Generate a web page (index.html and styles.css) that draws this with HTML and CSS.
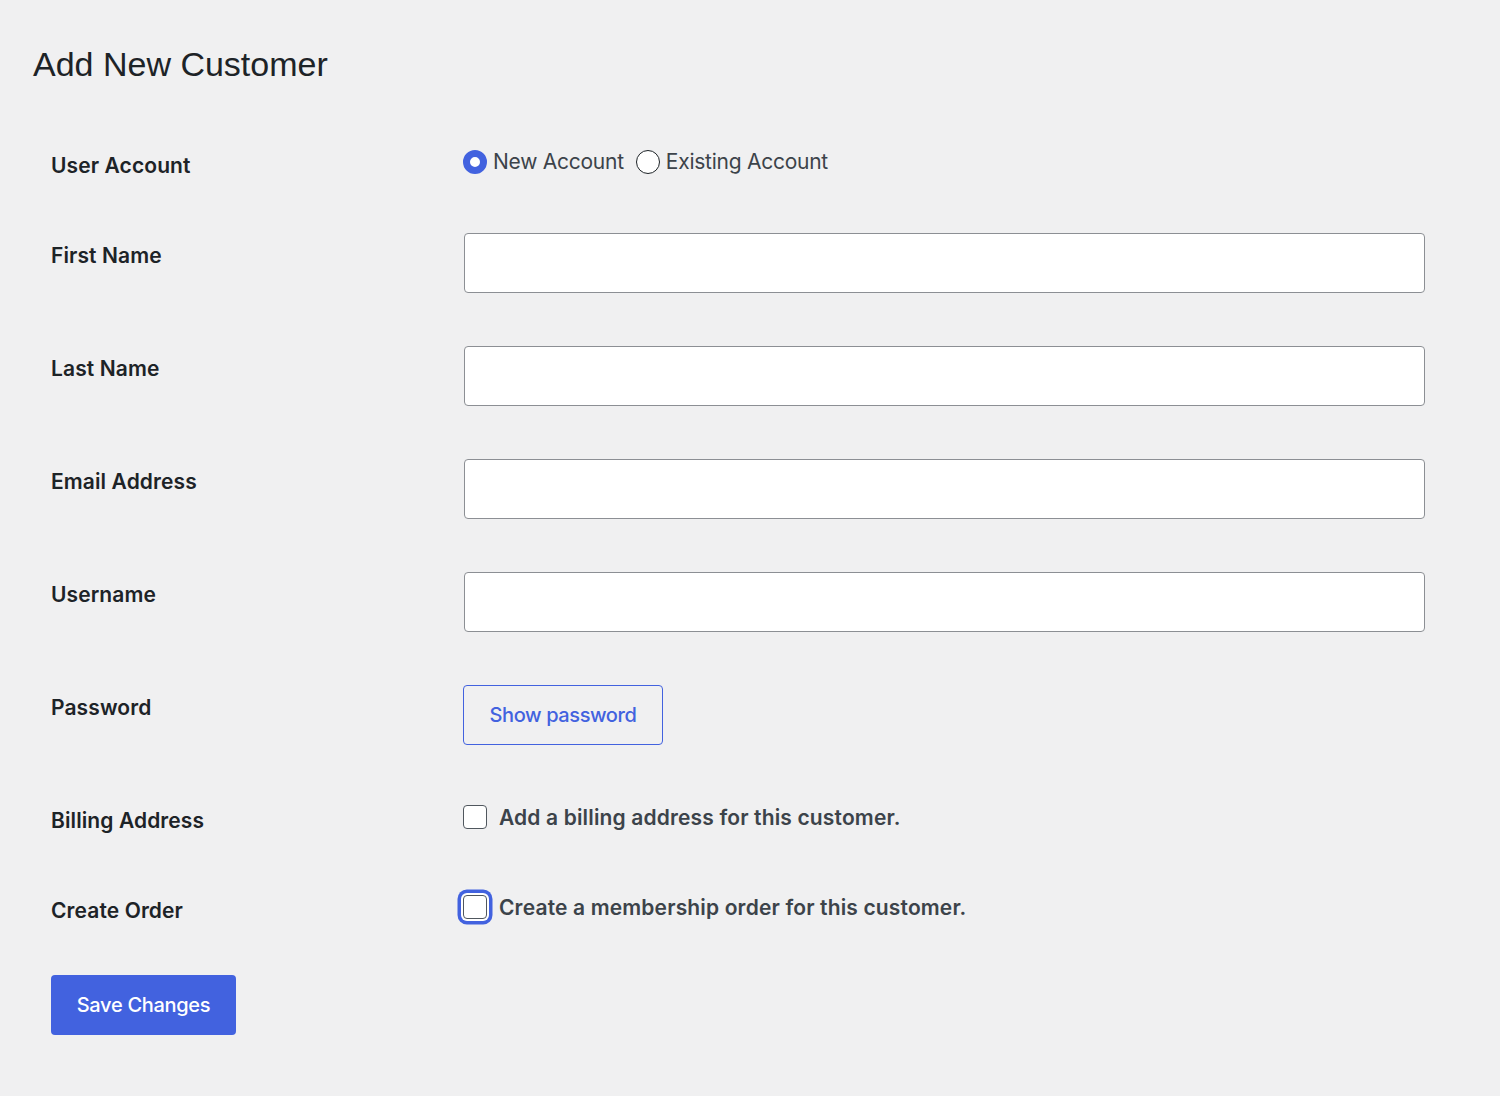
FILE: index.html
```html
<!DOCTYPE html>
<html lang="en">
<head>
<meta charset="utf-8">
<title>Add New Customer</title>
<link rel="stylesheet" href="styles.css">
</head>
<body>
<div class="page">
  <h1 class="title">Add New Customer</h1>
  <form class="form">
    <div class="row row-short">
      <div class="label">User Account</div>
      <div class="field field-radio">
        <label class="choice"><span class="radio checked"></span><span class="choice-text">New Account</span></label>
        <label class="choice"><span class="radio"></span><span class="choice-text">Existing Account</span></label>
      </div>
    </div>
    <div class="row">
      <div class="label">First Name</div>
      <div class="field"><div class="text-input"></div></div>
    </div>
    <div class="row">
      <div class="label">Last Name</div>
      <div class="field"><div class="text-input"></div></div>
    </div>
    <div class="row">
      <div class="label">Email Address</div>
      <div class="field"><div class="text-input"></div></div>
    </div>
    <div class="row">
      <div class="label">Username</div>
      <div class="field"><div class="text-input"></div></div>
    </div>
    <div class="row">
      <div class="label">Password</div>
      <div class="field"><div class="btn-secondary">Show password</div></div>
    </div>
    <div class="row row-short">
      <div class="label">Billing Address</div>
      <div class="field field-check">
        <label class="check-line"><span class="checkbox"></span><span class="check-text">Add a billing address for this customer.</span></label>
      </div>
    </div>
    <div class="row row-short">
      <div class="label">Create Order</div>
      <div class="field field-check">
        <label class="check-line"><span class="checkbox focused"></span><span class="check-text">Create a membership order for this customer.</span></label>
      </div>
    </div>
    <div class="actions">
      <div class="btn-primary">Save Changes</div>
    </div>
  </form>
</div>
</body>
</html>
```

FILE: styles.css
```css
html, body {
  margin: 0;
  padding: 0;
  background: #f0f0f1;
}
body {
  font-family: Inter, "Noto Sans", sans-serif;
  color: #1d2327;
}
.page {
  padding-top: 42px;
  width: 1500px;
  height: 1096px;
  box-sizing: border-box;
}
.title {
  margin: 0;
  padding-left: 33px;
  font-family: "Liberation Sans", Arial, sans-serif;
  font-weight: 400;
  font-size: 34px;
  line-height: 44px;
  color: #1d2327;
}
.form {
  margin-top: 34.5px;
  padding-left: 51px;
}
.row {
  display: grid;
  grid-template-columns: 412px 962px;
  height: 113px;
}
.row-short {
  height: 90px;
}
.label {
  padding-top: 31px;
  font-size: 21px;
  line-height: 27px;
  font-weight: 600;
  color: #1d2327;
  letter-spacing: 0.1px;
}
.field {
  padding-top: 22.5px;
  box-sizing: border-box;
}
.text-input {
  margin-left: 1px;
  width: 961px;
  height: 60px;
  box-sizing: border-box;
  background: #fff;
  border: 1.5px solid #8c8f94;
  border-radius: 4px;
}
.field-radio {
  padding-top: 29px;
  display: flex;
  align-items: center;
  gap: 12px;
  height: 53px;
  box-sizing: border-box;
}
.choice {
  display: flex;
  align-items: center;
  gap: 6px;
  height: 24px;
}
.radio {
  width: 24px;
  height: 24px;
  box-sizing: border-box;
  border-radius: 50%;
  background: #fff;
  border: 1.5px solid #1d2327;
  flex: none;
}
.radio.checked {
  border: 7.5px solid #4262df;
}
.choice-text {
  font-size: 21px;
  line-height: 27px;
  color: #3c434a;
  letter-spacing: -0.25px;
}
.btn-secondary {
  width: 200px;
  height: 60px;
  box-sizing: border-box;
  border: 1.5px solid #4262df;
  border-radius: 4px;
  color: #4262df;
  font-size: 20px;
  font-weight: 500;
  letter-spacing: -0.4px;
  display: flex;
  align-items: center;
  justify-content: center;
}
.field-check {
  padding-top: 29.5px;
}
.check-line {
  display: flex;
  align-items: center;
  gap: 12px;
  height: 24px;
}
.checkbox {
  width: 24px;
  height: 24px;
  box-sizing: border-box;
  background: #fff;
  border: 1.5px solid #50575e;
  border-radius: 4px;
  flex: none;
}
.checkbox.focused {
  box-shadow: 0 0 0 2px #fff, 0 0 0 5.5px #4262df;
}
.check-text {
  font-size: 21px;
  line-height: 27px;
  font-weight: 600;
  color: #3c434a;
  letter-spacing: 0.15px;
}
.actions {
  padding-top: 19.5px;
}
.btn-primary {
  width: 185px;
  height: 60px;
  box-sizing: border-box;
  background: #4262df;
  border-radius: 4px;
  color: #fff;
  font-size: 20px;
  font-weight: 500;
  letter-spacing: -0.3px;
  display: flex;
  align-items: center;
  justify-content: center;
}
```
